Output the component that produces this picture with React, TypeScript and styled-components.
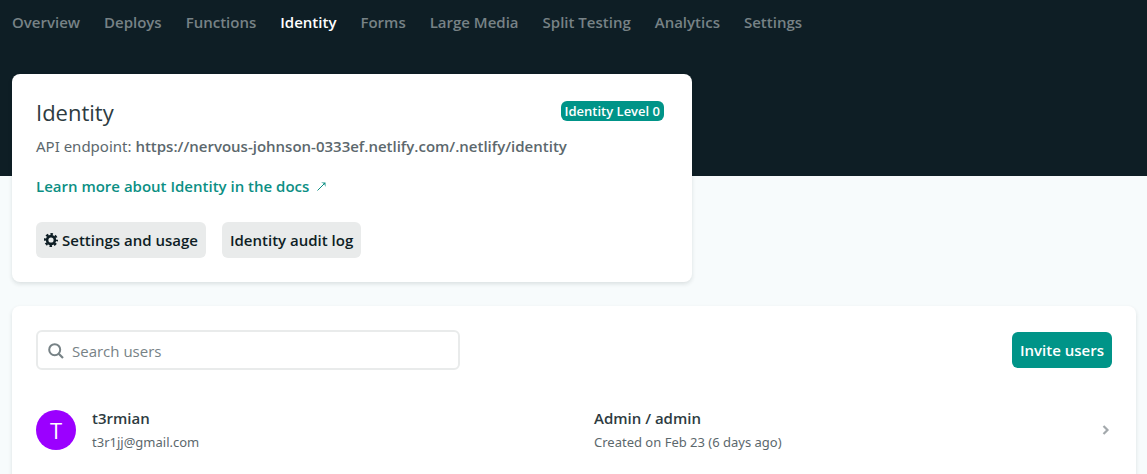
import React from "react";
import styled, { createGlobalStyle } from "styled-components";

const GlobalStyle = createGlobalStyle`
  * { box-sizing: border-box; }
  body {
    margin: 0;
    background: #f7fbfc;
    color: #2d3b41;
    font-family: "Open Sans", "Noto Sans", sans-serif;
    font-size: 15px;
    line-height: 24px;
  }
  h1, p { margin: 0; }
  button, input { font: inherit; }
`;

const Header = styled.header`
  height: 176px;
  padding: 10px 12px 0;
  background: #0e1e25;
`;

const Nav = styled.nav`
  display: flex;
  gap: 24px;
  white-space: nowrap;
`;

const NavLink = styled.a<{ $active?: boolean }>`
  color: ${(p) => (p.$active ? "#ffffff" : "#778286")};
  font-weight: 600;
  text-decoration: none;
`;

const Main = styled.main`
  display: flex;
  flex-direction: column;
  gap: 24px;
  margin-top: -102px;
  padding: 0 11px 0 12px;
`;

const Card = styled.section<{ $narrow?: boolean }>`
  width: 100%;
  max-width: ${(p) => (p.$narrow ? "680px" : "none")};
  padding: 24px;
  background: #ffffff;
  border-radius: ${(p) => (p.$narrow ? "8px" : "8px 8px 0 0")};
  box-shadow: 0 2px 4px rgba(14, 30, 37, 0.12);
`;

const TitleRow = styled.div`
  display: flex;
  justify-content: space-between;
  align-items: center;
  padding-right: 4px;
`;

const Title = styled.h1`
  margin-bottom: 4px;
  font-size: 22px;
  line-height: 28px;
  font-weight: 500;
`;

const Badge = styled.span`
  margin-bottom: 6px;
  padding: 0 4px;
  border-radius: 6px;
  background: #009488;
  color: #ffffff;
  font-size: 13px;
  line-height: 20px;
  font-weight: 600;
`;

const Endpoint = styled.p`
  padding-top: 4px;
  color: #5c686d;
  font-family: "Noto Sans", "Open Sans", sans-serif;

  strong {
    font-family: "Open Sans", "Noto Sans", sans-serif;
    font-weight: 600;
  }
`;

const DocsLink = styled.a`
  display: inline-flex;
  align-items: center;
  gap: 8px;
  margin-top: 16px;
  color: #0c8f84;
  font-weight: 600;
  text-decoration: none;
`;

const Actions = styled.div`
  display: flex;
  gap: 16px;
  margin-top: 24px;
`;

const Button = styled.button<{ $primary?: boolean }>`
  display: inline-flex;
  align-items: center;
  gap: 4px;
  height: 36px;
  padding: 0 8px;
  border: 0;
  border-radius: 6px;
  background: ${(p) => (p.$primary ? "#009488" : "#e9ebeb")};
  color: ${(p) => (p.$primary ? "#ffffff" : "#0e1e25")};
  font-weight: 600;
  white-space: nowrap;
`;

const Toolbar = styled.div`
  display: flex;
  justify-content: space-between;
  align-items: center;
  gap: 24px;
`;

const SearchBox = styled.label`
  display: flex;
  align-items: center;
  gap: 8px;
  width: 424px;
  height: 40px;
  padding: 2px 10px 0;
  border: 2px solid #e9ebeb;
  border-radius: 6px;
  color: #778286;
`;

const SearchInput = styled.input`
  flex: 1;
  min-width: 0;
  padding: 0;
  border: 0;
  outline: 0;
  background: transparent;
  color: #2d3b41;
  font-weight: 500;

  &::placeholder { color: #778286; opacity: 1; }
`;

const UserRow = styled.a`
  display: grid;
  grid-template-columns: calc(50% + 20px) 1fr 24px;
  align-items: center;
  padding-top: 36px;
  color: inherit;
  text-decoration: none;
`;

const User = styled.div`
  display: flex;
  align-items: center;
  gap: 16px;
`;

const Avatar = styled.span`
  width: 40px;
  height: 40px;
  border-radius: 50%;
  background: #9b00ff;
  color: #ffffff;
  font-size: 22px;
  line-height: 40px;
  text-align: center;
`;

const Primary = styled.p`
  font-weight: 600;
`;

const Secondary = styled.p`
  color: #5c686d;
  font-family: "Noto Sans", "Open Sans", sans-serif;
  font-size: 13px;
`;

const Chevron = styled.svg`
  justify-self: end;
  margin-right: 2px;
`;

const tabs = ["Overview", "Deploys", "Functions", "Identity", "Forms", "Large Media", "Split Testing", "Analytics", "Settings"];

export default function App() {
  return (
    <>
      <GlobalStyle />
      <Header>
        <Nav aria-label="Site">
          {tabs.map((tab) => (
            <NavLink key={tab} href="#" $active={tab === "Identity"}>{tab}</NavLink>
          ))}
        </Nav>
      </Header>
      <Main>
        <Card $narrow>
          <TitleRow>
            <Title>Identity</Title>
            <Badge>Identity Level 0</Badge>
          </TitleRow>
          <Endpoint>
            API endpoint: <strong>https://nervous-johnson-0333ef.netlify.com/.netlify/identity</strong>
          </Endpoint>
          <DocsLink href="#">
            Learn more about Identity in the docs
            <svg width="9" height="9" viewBox="0 0 9 9" fill="none" stroke="currentColor" aria-hidden="true">
              <path d="M0.5 8.5L7.5 1.5" />
              <path d="M4 0.5H8.5V5L7.5 2.5L6.5 1.5Z" fill="currentColor" stroke="none" />
            </svg>
          </DocsLink>
          <Actions>
            <Button type="button">
              <svg width="14" height="14" viewBox="0 0 14 14" fill="none" stroke="currentColor" aria-hidden="true">
                <circle cx="7" cy="7" r="3.9" strokeWidth="2.6" />
                <circle cx="7" cy="7" r="5.9" strokeWidth="2.2" strokeDasharray="2.5 2.134" strokeDashoffset="1.25" />
              </svg>
              Settings and usage
            </Button>
            <Button type="button">Identity audit log</Button>
          </Actions>
        </Card>
        <Card>
          <Toolbar>
            <SearchBox>
              <svg width="16" height="16" viewBox="0 0 16 16" fill="none" stroke="currentColor" strokeWidth="2" aria-hidden="true">
                <circle cx="6.7" cy="6.7" r="5.5" />
                <path d="M10.7 10.7L15 15" strokeWidth="2.2" />
              </svg>
              <SearchInput type="search" placeholder="Search users" aria-label="Search users" />
            </SearchBox>
            <Button type="button" $primary>Invite users</Button>
          </Toolbar>
          <UserRow href="#">
            <User>
              <Avatar>T</Avatar>
              <div>
                <Primary>t3rmian</Primary>
                <Secondary>t3r1jj@gmail.com</Secondary>
              </div>
            </User>
            <div>
              <Primary>Admin / admin</Primary>
              <Secondary>Created on Feb 23 (6 days ago)</Secondary>
            </div>
            <Chevron width="8" height="10" viewBox="0 0 8 10" fill="none" stroke="#a3a9ac" strokeWidth="2.2" aria-hidden="true">
              <path d="M1.5 1L5.5 5L1.5 9" />
            </Chevron>
          </UserRow>
        </Card>
      </Main>
    </>
  );
}
